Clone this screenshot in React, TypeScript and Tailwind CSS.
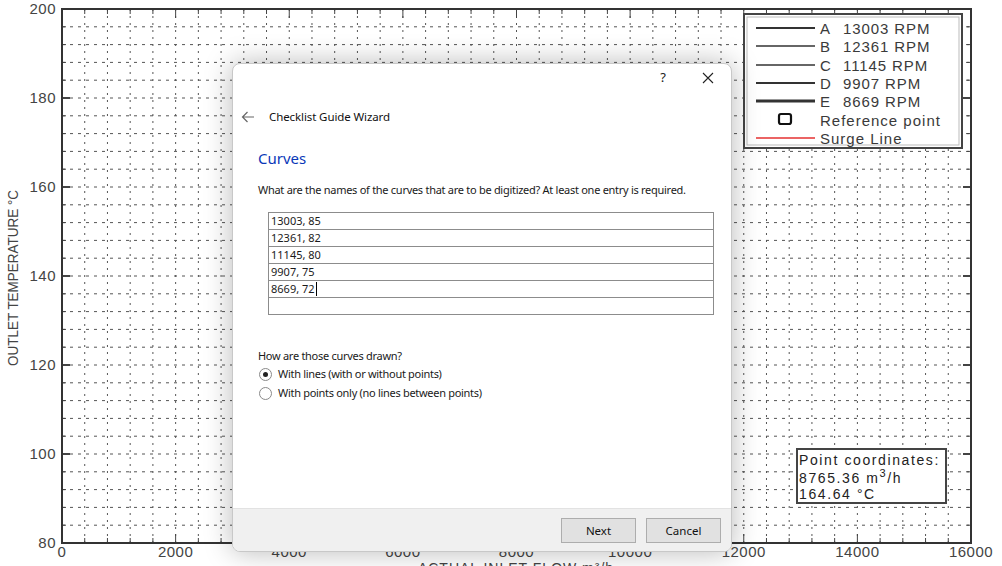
import React from 'react';

// Chart geometry (pixels on the 1002x566 page)
const X0 = 62;
const X1 = 971;
const Y0 = 9;
const Y1 = 543;
const xStep = (X1 - X0) / 40;
const yStep = (Y1 - Y0) / 30;

const yLabels = [200, 180, 160, 140, 120, 100, 80];
const xLabels = [0, 2000, 4000, 6000, 8000, 10000, 12000, 14000, 16000];

const legend = [
    { key: 'A', rpm: '13003 RPM', y: 28, w: 2 },
    { key: 'B', rpm: '12361 RPM', y: 46, w: 1.6 },
    { key: 'C', rpm: '11145 RPM', y: 65, w: 1.6 },
    { key: 'D', rpm: '9907 RPM', y: 83, w: 2 },
    { key: 'E', rpm: '8669 RPM', y: 101, w: 3 },
];

const rows = ['13003, 85', '12361, 82', '11145, 80', '9907, 75', '8669, 72', ''];

function Chart() {
    const font = '"Liberation Sans", Arial, sans-serif';
    return (
        <svg width="1002" height="566" className="block" fontFamily={font}>
            <rect width="1002" height="566" fill="#fff" />

            {/* grid */}
            {Array.from({ length: 29 }, (_, i) => {
                const y = Y0 + (i + 1) * yStep;
                return <line key={'h' + i} x1={X0} x2={X1} y1={y} y2={y} stroke="#555" strokeWidth="1" strokeDasharray="3 5" />;
            })}
            {Array.from({ length: 39 }, (_, i) => {
                const x = X0 + (i + 1) * xStep;
                return <line key={'v' + i} x1={x} x2={x} y1={Y0} y2={Y1} stroke="#555" strokeWidth="1" strokeDasharray="2 5" />;
            })}

            {/* ticks */}
            {Array.from({ length: 29 }, (_, i) => {
                const y = Y0 + (i + 1) * yStep;
                const major = (i + 1) % 5 === 0;
                return (
                    <g key={'ty' + i}>
                        <line x1={X0} x2={X0 + (major ? 8 : 4)} y1={y} y2={y} stroke="#444" strokeWidth={major ? 2 : 1} />
                        <line x1={X1 - (major ? 8 : 4)} x2={X1} y1={y} y2={y} stroke="#444" strokeWidth={major ? 2 : 1} />
                    </g>
                );
            })}
            {Array.from({ length: 39 }, (_, i) => {
                const x = X0 + (i + 1) * xStep;
                const major = (i + 1) % 5 === 0;
                return (
                    <g key={'tx' + i}>
                        <line x1={x} x2={x} y1={Y1} y2={Y1 - (major ? 9 : 5)} stroke="#444" strokeWidth="1" />
                        <line x1={x} x2={x} y1={Y0} y2={Y0 + (major ? 9 : 5)} stroke="#444" strokeWidth="1" />
                    </g>
                );
            })}

            {/* frame */}
            <rect x={X0} y={Y0} width={X1 - X0} height={Y1 - Y0} fill="none" stroke="#333" strokeWidth="2" />

            {/* axis labels */}
            {yLabels.map((v, i) => (
                <text key={v} x={56} y={Y0 + i * yStep * 5 + 5} textAnchor="end" fontSize="15" fill="#444" letterSpacing="0.5">
                    {v}
                </text>
            ))}
            {xLabels.map((v, i) => (
                <text key={v} x={X0 + i * xStep * 5} y={557} textAnchor="middle" fontSize="15" fill="#444" letterSpacing="0.5">
                    {v}
                </text>
            ))}
            <text x={0} y={0} transform="translate(18 278) rotate(-90)" textAnchor="middle" fontSize="14" fill="#444" textLength="176" lengthAdjust="spacingAndGlyphs">
                OUTLET TEMPERATURE °C
            </text>
            <text x={516} y={573} textAnchor="middle" fontSize="14" fill="#444" letterSpacing="1">
                ACTUAL INLET FLOW m³/h
            </text>

            {/* legend */}
            <rect x="744" y="14" width="218" height="134" fill="#fff" stroke="#444" strokeWidth="2" />
            <rect x="747" y="17" width="212" height="128" fill="none" stroke="#bbb" strokeWidth="1" />
            {legend.map((l) => (
                <g key={l.key} fontSize="15" fill="#3a3a3a" letterSpacing="0.9">
                    <line x1="756" x2="815" y1={l.y} y2={l.y} stroke="#333" strokeWidth={l.w} />
                    <text x="820" y={l.y + 6}>{l.key}</text>
                    <text x="843" y={l.y + 6}>{l.rpm}</text>
                </g>
            ))}
            <rect x="779" y="114" width="12" height="10" rx="2" fill="none" stroke="#111" strokeWidth="2.2" />
            <text x="820" y="126" fontSize="15" fill="#3a3a3a" letterSpacing="1">Reference point</text>
            <line x1="756" x2="815" y1="138" y2="138" stroke="#e53030" strokeWidth="1.5" />
            <text x="820" y="144" fontSize="15" fill="#3a3a3a" letterSpacing="1">Surge Line</text>

            {/* point coordinates */}
            <rect x="797" y="449" width="149" height="54" fill="#fff" stroke="#444" strokeWidth="2" />
            <text x="799" y="465" fontSize="14" fill="#222" letterSpacing="1.6">Point coordinates:</text>
            <text x="799" y="483" fontSize="14" fill="#222" letterSpacing="1.6">
                8765.36 m<tspan dy="-6" fontSize="11">3</tspan><tspan dy="6">/h</tspan>
            </text>
            <text x="799" y="499" fontSize="14" fill="#222" letterSpacing="1.6">164.64 °C</text>
        </svg>
    );
}

function Radio({ checked, label }: { checked?: boolean; label: string }) {
    return (
        <div className="flex items-center gap-[6px] h-[19px]">
            <span className="w-[13px] h-[13px] rounded-full border border-[#8a8a8a] bg-white flex items-center justify-center">
                {checked && <span className="w-[5px] h-[5px] rounded-full bg-[#222]" />}
            </span>
            <span>{label}</span>
        </div>
    );
}

export default function App() {
    return (
        <div className="relative w-[1002px] h-[566px] overflow-hidden bg-white">
            <Chart />

            {/* Wizard dialog */}
            <div
                className="absolute left-[232px] top-[63px] w-[500px] h-[489px] bg-white rounded-[8px] border border-[#c8c8c8] shadow-[0_0_28px_rgba(0,0,0,0.28)] flex flex-col overflow-hidden text-[11px] text-[#1a1a1a]"
                style={{ fontFamily: '"Noto Sans", "Open Sans", sans-serif' }}
            >
                {/* title bar */}
                <div className="h-[28px] flex items-center justify-end pr-[17px] gap-[36px] shrink-0">
                    <span className="text-[13px] text-[#222]">?</span>
                    <svg width="12" height="12" viewBox="0 0 12 12">
                        <path d="M1 1L11 11M11 1L1 11" stroke="#222" strokeWidth="1.1" />
                    </svg>
                </div>

                {/* header */}
                <div className="h-[50px] flex items-center pl-[8px] shrink-0">
                    <svg width="14" height="12" viewBox="0 0 14 12" className="mr-[14px]">
                        <path d="M13 6H1.5M6.5 1L1.5 6L6.5 11" fill="none" stroke="#666" strokeWidth="1.2" />
                    </svg>
                    <span className="text-[11.5px] text-[#111] tracking-[-0.1px]">Checklist Guide Wizard</span>
                </div>

                {/* body */}
                <div className="flex-1 px-[25px] pt-[6px]">
                    <div className="text-[15px] text-[#0a38b8] leading-[20px]">Curves</div>
                    <div className="mt-[14px] leading-[16px] whitespace-nowrap tracking-[-0.28px]">
                        What are the names of the curves that are to be digitized? At least one entry is required.
                    </div>

                    <div className="ml-[10px] mt-[14px] w-[446px] border border-[#8c8c8c] border-b-0">
                        {rows.map((r, i) => (
                            <div key={i} className="h-[17px] border-b border-[#8c8c8c] pl-[2px] leading-[16px] flex items-center">
                                <span>{r}</span>
                                {i === 4 && <span className="ml-[1px] w-[1px] h-[14px] bg-black" />}
                            </div>
                        ))}
                    </div>

                    <div className="mt-[33px] leading-[16px] tracking-[-0.28px]">How are those curves drawn?</div>
                    <div className="mt-[1px] pl-[1px] tracking-[-0.3px]">
                        <Radio checked label="With lines (with or without points)" />
                        <Radio label="With points only (no lines between points)" />
                    </div>
                </div>

                {/* footer */}
                <div className="h-[43px] shrink-0 bg-[#f0f0f0] border-t border-[#e2e2e2] flex items-center justify-end gap-[10px] pr-[10px] pt-[1px]">
                    <button className="w-[75px] h-[25px] bg-[#e1e1e1] border border-[#adadad] text-[11.5px] text-[#111]">Next</button>
                    <button className="w-[75px] h-[25px] bg-[#e1e1e1] border border-[#adadad] text-[11.5px] text-[#111]">Cancel</button>
                </div>
            </div>
        </div>
    );
}
